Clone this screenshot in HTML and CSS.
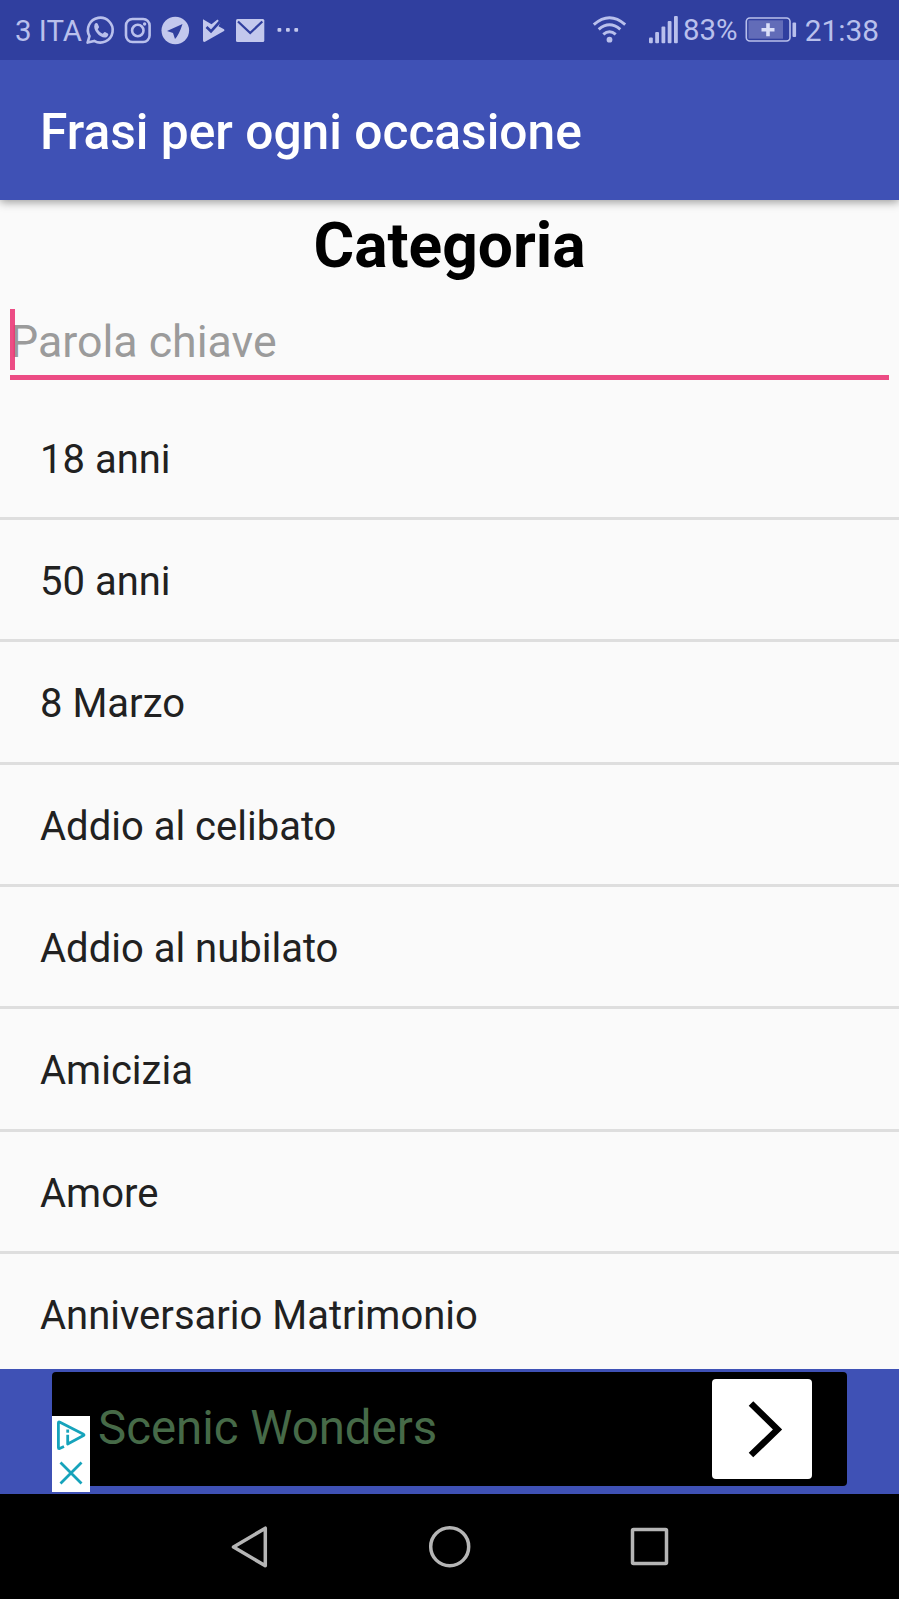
FILE: index.html
```html
<!DOCTYPE html>
<html lang="it">

<head>
  <meta charset="UTF-8">
  <meta name="viewport" content="width=device-width, initial-scale=1.0">
  <title>Frasi per ogni occasione</title>
  <link rel="stylesheet" href="styles.css">
</head>

<body>
  <div class="status-bar">
    <span class="carrier">3 ITA</span>
    <!-- notifications -->
    <svg class="notifications" width="220" height="32" viewBox="84 14 220 32">
      <g fill="none" stroke="#b9c0ec" stroke-width="2.6" stroke-linejoin="round">
        <path d="M87.6 42.6L89.5 36.2A12.4 12.4 0 1 1 94.2 40.9Z" />
        <rect x="126" y="19" width="23.6" height="23" rx="6.5" />
        <circle cx="137.8" cy="30.5" r="5.7" />
      </g>
      <path fill="#b9c0ec" d="M94.6 24.2c1-1.4 2.6-1.5 3.2-.1l1.2 2.7c.3.8-.9 1.9-1.3 2.4 1.3 2.3 2.9 3.7 5.1 4.6.5-.5 1.5-2.1 2.2-1.8l2.8 1.4c1.3.8-.2 3.5-1.8 4-4.9 1.6-13.8-7.1-11.4-13.2z" />
      <circle cx="144.6" cy="24" r="1.7" fill="#b9c0ec" />
      <circle cx="175.3" cy="30.5" r="13.8" fill="#c3c8ed" />
      <path fill="#303f9f" d="M182.5 24L167 31L173 33L175 39Q179 35 182.5 24Z" />
      <path fill="#c3c8ed" d="M203 19.3L211.5 24.2L217.5 19.5L220.5 22.5L218.5 26.3L224 29.3Q225 30.2 224 31L205 41.8Q203 42.3 203 40.5Z" />
      <path fill="none" stroke="#303f9f" stroke-width="2.6" d="M206.5 27L211 31.3L220 21.5" />
      <rect x="236" y="19" width="28.3" height="23" rx="1.5" fill="#c3c8ed" />
      <path fill="none" stroke="#303f9f" stroke-width="2.3" d="M238 21.5L250.2 33L262.3 21.5" />
      <g fill="#c3c8ed">
        <rect x="277.5" y="28" width="3.8" height="3.8" rx="1" />
        <rect x="286" y="28" width="3.8" height="3.8" rx="1" />
        <rect x="294.3" y="28" width="3.8" height="3.8" rx="1" />
      </g>
    </svg>
    <!-- wifi and signal -->
    <svg class="signal" width="90" height="32" viewBox="590 14 90 32">
      <g fill="none" stroke="#b9c0ec" stroke-width="3">
        <path d="M593.8 24.6Q609.5 10.8 625.2 24.6" />
        <path d="M598.7 29.4Q609.5 20.2 620.3 29.4" />
        <path d="M603.3 34.4Q609.5 29 615.7 34.4" />
      </g>
      <circle cx="609.5" cy="39.7" r="2.9" fill="#b9c0ec" />
      <g fill="#b9c0ec">
        <rect x="649" y="37.5" width="3.8" height="5.7" rx="1" />
        <rect x="655.2" y="32" width="3.8" height="11.2" rx="1" />
        <rect x="661.5" y="26.5" width="3.8" height="16.7" rx="1" />
        <rect x="667.7" y="21" width="3.8" height="22.2" rx="1" />
        <rect x="674" y="16" width="3.8" height="27.2" rx="1" />
      </g>
    </svg>
    <span class="percent">83%</span>
    <svg class="battery" width="52" height="26" viewBox="745 17 52 26">
      <rect x="746.3" y="18" width="43.7" height="23" rx="3.5" fill="none" stroke="#b9c0ec" stroke-width="1.6" />
      <rect x="748.5" y="20.3" width="34.5" height="18.4" fill="#626cb8" />
      <path d="M768 23.3v13M761.5 29.8h13" stroke="#dadef8" stroke-width="3.6" />
      <rect x="792.5" y="22.5" width="3.6" height="14.5" rx="1" fill="#b9c0ec" />
    </svg>
    <span class="clock">21:38</span>
  </div>

  <header class="app-bar">
    <h1>Frasi per ogni occasione</h1>
  </header>

  <main class="content">
    <h2 class="heading">Categoria</h2>
    <div class="search">
      <input type="text" placeholder="Parola chiave">
      <span class="caret"></span>
    </div>
    <ul class="category-list">
      <li>18 anni</li>
      <li>50 anni</li>
      <li>8 Marzo</li>
      <li>Addio al celibato</li>
      <li>Addio al nubilato</li>
      <li>Amicizia</li>
      <li>Amore</li>
      <li>Anniversario Matrimonio</li>
    </ul>
  </main>

  <div class="ad">
    <div class="banner">
      <span class="ad-title">Scenic Wonders</span>
      <button class="ad-btn">
        <svg width="100" height="100" viewBox="0 0 100 100">
          <path d="M39 24.5L65.5 50.5L39 76" fill="none" stroke="#000" stroke-width="6.5" />
        </svg>
      </button>
      <div class="ad-choices">
        <svg width="38" height="76" viewBox="0 0 38 76" fill="none" stroke="#16a3bb" stroke-width="2.8" stroke-linejoin="round">
          <path d="M12 30.5L7 32.7Q6.4 32.7 6.4 31.5V7Q6.4 5.5 8 6.2L31.5 18.3Q32.5 19 31.5 19.6L15.7 28V18.8" />
          <path d="M15.7 13.5v3.2" />
          <path d="M8.5 46.5L29.5 67.5M29.5 46.5L8.5 67.5" />
        </svg>
      </div>
    </div>
  </div>

  <nav class="nav-bar">
    <svg width="44" height="44" viewBox="0 0 44 44"><path d="M5.5 22L37.3 3.2V40.8Z" /></svg>
    <svg width="44" height="44" viewBox="0 0 44 44"><circle cx="21.7" cy="21.7" r="19" /></svg>
    <svg width="44" height="44" viewBox="0 0 44 44"><rect x="4.5" y="4.5" width="34" height="34" rx="1" /></svg>
  </nav>
</body>

</html>
```

FILE: styles.css
```css
* {
  margin: 0;
  padding: 0;
  box-sizing: border-box;
  font-family: Roboto, sans-serif;
}

body {
  display: flex;
  flex-direction: column;
  height: 1599px;
  background: #fafafa;
  color: #212121;
  overflow: hidden;
}

.status-bar {
  display: flex;
  align-items: center;
  height: 60px;
  flex-shrink: 0;
  padding: 0 20px 0 15px;
  background: #303f9f;
  color: #b9c0ec;
  font-size: 29.4px;
  line-height: 60px;
  white-space: nowrap;
  z-index: 2;
}

.carrier {
  width: 69px;
  padding-top: 2px;
}

.signal {
  margin-left: 286px;
}

.percent {
  width: 65px;
  padding-left: 3px;
  padding-bottom: 1px;
}

.clock {
  margin-left: auto;
  padding-top: 2px;
  font-size: 29.8px;
}

.app-bar {
  display: flex;
  align-items: center;
  height: 140px;
  flex-shrink: 0;
  padding: 3px 40px 0;
  background: #3f51b5;
  color: #fff;
  box-shadow: 0 2px 9px rgba(0, 0, 0, 0.4);
  z-index: 1;
}

.app-bar h1 {
  font-size: 49.7px;
  font-weight: 500;
}

.content {
  height: 1169px;
  flex-shrink: 0;
  overflow: hidden;
}

.heading {
  height: 92px;
  line-height: 91px;
  font-size: 62.3px;
  font-weight: 700;
  color: #000;
  text-align: center;
}

.search {
  position: relative;
  height: 88px;
  margin: 0 10px 17.5px;
  border-bottom: 5px solid #ec4c84;
}

.search input {
  width: 100%;
  height: 100%;
  padding-top: 17px;
  border: none;
  outline: none;
  background: transparent;
  font-size: 44.7px;
}

.search input::placeholder {
  color: #9b9b9b;
}

.caret {
  position: absolute;
  left: 0;
  top: 17px;
  width: 5px;
  height: 61px;
  background: rgba(233, 50, 115, 0.87);
}

.category-list {
  list-style: none;
}

.category-list li {
  height: 122.4px;
  padding-left: 40px;
  border-bottom: 3px solid #dedede;
  font-size: 40px;
  line-height: 123px;
}

.ad {
  display: flex;
  justify-content: center;
  height: 125px;
  flex-shrink: 0;
  padding-top: 3px;
  background: #3f51b5;
}

.banner {
  position: relative;
  display: flex;
  justify-content: space-between;
  align-items: center;
  width: 795px;
  height: 114px;
  padding: 0 35px 0 46px;
  border-radius: 4px;
  background: #000;
}

.ad-title {
  padding-bottom: 2px;
  font-size: 47.4px;
  color: #466a48;
}

.ad-btn {
  width: 100px;
  height: 100px;
  border: none;
  border-radius: 4px;
  background: #fff;
}

.ad-choices {
  position: absolute;
  left: 0;
  top: 44px;
  width: 38px;
  height: 76px;
  background: #fff;
}

.nav-bar {
  display: flex;
  justify-content: center;
  align-items: center;
  gap: 156px;
  height: 105px;
  flex-shrink: 0;
  background: #000;
}

.nav-bar svg {
  fill: none;
  stroke: #b5b5b5;
  stroke-width: 3.5;
  stroke-linejoin: round;
}
```
